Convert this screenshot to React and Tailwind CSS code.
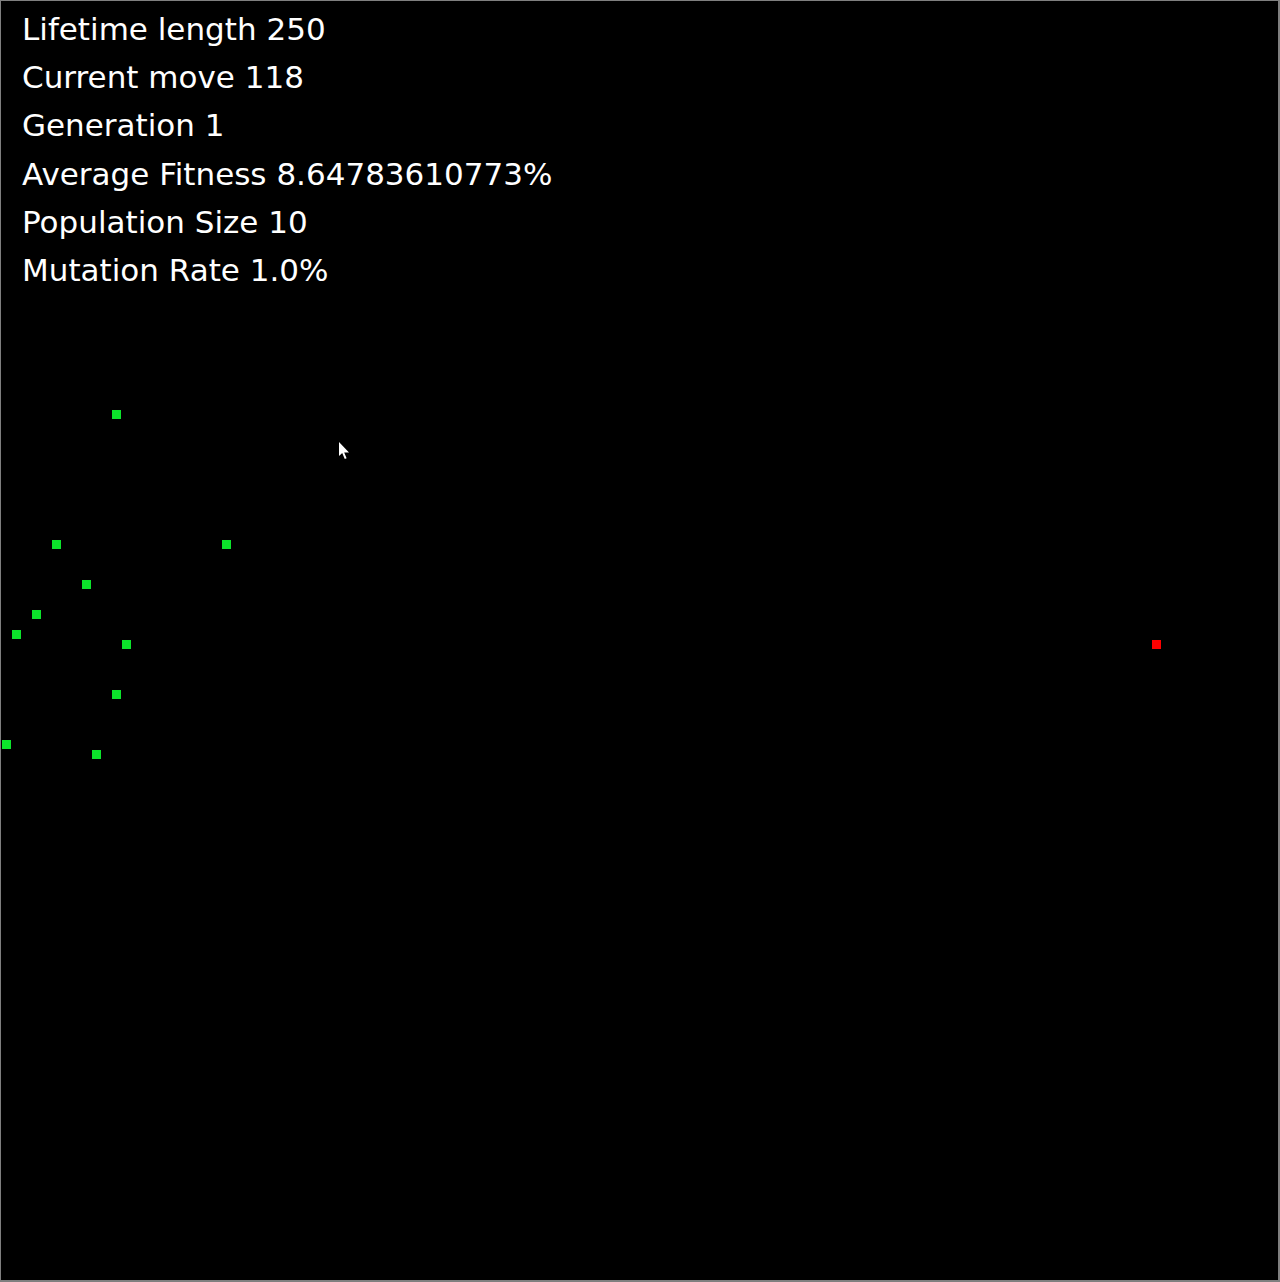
const stats = [
  ['Lifetime length', '250'],
  ['Current move', '118'],
  ['Generation', '1'],
  ['Average Fitness', '8.64783610773%'],
  ['Population Size', '10'],
  ['Mutation Rate', '1.0%'],
]

// dot positions on the world canvas
const agents = [
  [112, 410],
  [52, 540],
  [222, 540],
  [82, 580],
  [32, 610],
  [12, 630],
  [122, 640],
  [112, 690],
  [2, 740],
  [92, 750],
]

const target = [1152, 640]

export default function App() {
  return (
    <div className="relative w-[1280px] h-[1282px] bg-black border-l border-t border-r-2 border-b-2 border-[#7f7f7f] overflow-hidden">
      <div className="flex flex-col pl-[21px] pt-[4px] text-white text-[31px] leading-[48.2px] font-['DejaVu_Sans',sans-serif]">
        {stats.map(([label, value]) => (
          <p key={label}>
            {label} {value}
          </p>
        ))}
      </div>

      {agents.map(([x, y], i) => (
        <div
          key={i}
          className="absolute w-[9px] h-[9px] bg-[#0ce42b]"
          style={{ left: x - 1, top: y - 1 }}
        />
      ))}
      <div
        className="absolute w-[9px] h-[9px] bg-[#ff0000]"
        style={{ left: target[0] - 1, top: target[1] - 1 }}
      />

      {/* mouse pointer */}
      <svg className="absolute left-[338px] top-[441px]" width="12" height="18" viewBox="0 0 12 18">
        <path d="M0 0 L0 14 L3.2 11 L5.8 17 L7.6 16.2 L5.2 10.4 L10 10.4 Z" fill="#fff" />
      </svg>
    </div>
  )
}
